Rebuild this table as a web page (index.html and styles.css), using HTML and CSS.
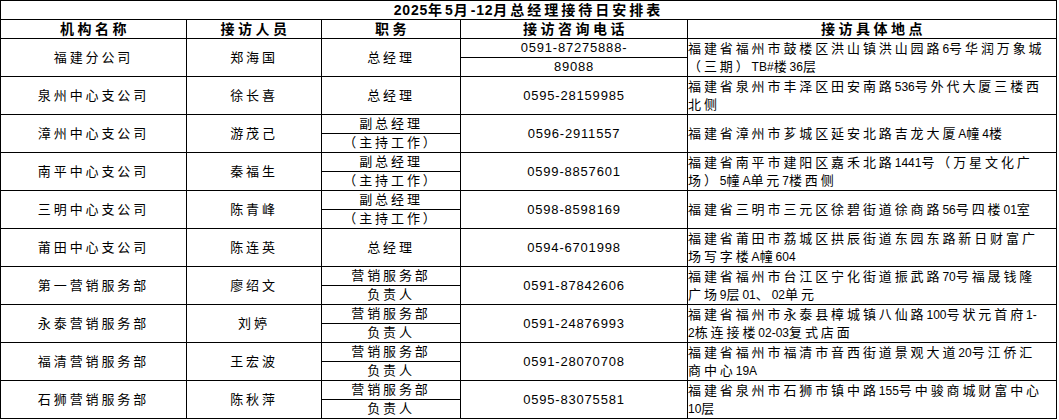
FILE: index.html
```html
<!DOCTYPE html>
<html lang="zh-CN">
<head>
<meta charset="utf-8">
<title>2025年5月-12月总经理接待日安排表</title>
<link rel="stylesheet" href="styles.css">
</head>
<body>
<table class="sheet">
  <colgroup>
    <col class="c-org"><col class="c-name"><col class="c-pos"><col class="c-tel"><col class="c-addr">
  </colgroup>
  <tr><td class="title" colspan="5"><span class="n">2025</span>年<span class="n">5</span>月<span class="n">-12</span>月总经理接待日安排表</td></tr>
  <tr class="head"><td>机构名称</td><td>接访人员</td><td>职务</td><td>接访咨询电话</td><td>接访具体地点</td></tr>

  <tr><td class="ctr" rowspan="2">福建分公司</td><td class="ctr" rowspan="2">郑海国</td><td class="ctr" rowspan="2">总经理</td><td class="tel">0591-87275888-</td><td class="addr" rowspan="2">福建省福州市鼓楼区洪山镇洪山园路<span class="n">6</span>号华润万象城<br>（三期）<span class="n">TB#</span>楼<span class="n">36</span>层</td></tr>
  <tr><td class="tel">89088</td></tr>

  <tr><td class="ctr" rowspan="2">泉州中心支公司</td><td class="ctr" rowspan="2">徐长喜</td><td class="ctr" rowspan="2">总经理</td><td class="tel" rowspan="2">0595-28159985</td><td class="addr" rowspan="2">福建省泉州市丰泽区田安南路<span class="n">536</span>号外代大厦三楼西<br>北侧</td></tr>
  <tr></tr>

  <tr><td class="ctr" rowspan="2">漳州中心支公司</td><td class="ctr" rowspan="2">游茂己</td><td class="ctr">副总经理</td><td class="tel" rowspan="2">0596-2911557</td><td class="addr" rowspan="2">福建省漳州市芗城区延安北路吉龙大厦<span class="n">A</span>幢<span class="n">4</span>楼</td></tr>
  <tr><td class="ctr">（主持工作）</td></tr>

  <tr><td class="ctr" rowspan="2">南平中心支公司</td><td class="ctr" rowspan="2">秦福生</td><td class="ctr">副总经理</td><td class="tel" rowspan="2">0599-8857601</td><td class="addr" rowspan="2">福建省南平市建阳区嘉禾北路<span class="n">1441</span>号（万星文化广<br>场）<span class="n">5</span>幢<span class="n">A</span>单元<span class="n">7</span>楼西侧</td></tr>
  <tr><td class="ctr">（主持工作）</td></tr>

  <tr><td class="ctr" rowspan="2">三明中心支公司</td><td class="ctr" rowspan="2">陈青峰</td><td class="ctr">副总经理</td><td class="tel" rowspan="2">0598-8598169</td><td class="addr" rowspan="2">福建省三明市三元区徐碧街道徐商路<span class="n">56</span>号四楼<span class="n">01</span>室</td></tr>
  <tr><td class="ctr">（主持工作）</td></tr>

  <tr><td class="ctr" rowspan="2">莆田中心支公司</td><td class="ctr" rowspan="2">陈连英</td><td class="ctr" rowspan="2">总经理</td><td class="tel" rowspan="2">0594-6701998</td><td class="addr" rowspan="2">福建省莆田市荔城区拱辰街道东园东路新日财富广<br>场写字楼<span class="n">A</span>幢<span class="n">604</span></td></tr>
  <tr></tr>

  <tr><td class="ctr" rowspan="2">第一营销服务部</td><td class="ctr" rowspan="2">廖绍文</td><td class="ctr">营销服务部</td><td class="tel" rowspan="2">0591-87842606</td><td class="addr" rowspan="2">福建省福州市台江区宁化街道振武路<span class="n">70</span>号福晟钱隆<br>广场<span class="n">9</span>层<span class="n">01</span>、<span class="n">02</span>单元</td></tr>
  <tr><td class="ctr">负责人</td></tr>

  <tr><td class="ctr" rowspan="2">永泰营销服务部</td><td class="ctr" rowspan="2">刘婷</td><td class="ctr">营销服务部</td><td class="tel" rowspan="2">0591-24876993</td><td class="addr" rowspan="2">福建省福州市永泰县樟城镇八仙路<span class="n">100</span>号状元首府<span class="n">1-</span><br><span class="n">2</span>栋连接楼<span class="n">02-03</span>复式店面</td></tr>
  <tr><td class="ctr">负责人</td></tr>

  <tr><td class="ctr" rowspan="2">福清营销服务部</td><td class="ctr" rowspan="2">王宏波</td><td class="ctr">营销服务部</td><td class="tel" rowspan="2">0591-28070708</td><td class="addr" rowspan="2">福建省福州市福清市音西街道景观大道<span class="n">20</span>号江侨汇<br>商中心<span class="n">19A</span></td></tr>
  <tr><td class="ctr">负责人</td></tr>

  <tr><td class="ctr" rowspan="2">石狮营销服务部</td><td class="ctr" rowspan="2">陈秋萍</td><td class="ctr">营销服务部</td><td class="tel" rowspan="2">0595-83075581</td><td class="addr" rowspan="2">福建省泉州市石狮市镇中路<span class="n">155</span>号中骏商城财富中心<br><span class="n">10</span>层</td></tr>
  <tr><td class="ctr">负责人</td></tr>
</table>
</body>
</html>
```

FILE: styles.css
```css
html, body {
  margin: 0;
  padding: 0;
  background: #fff;
  color: #000;
}

.sheet {
  border-collapse: collapse;
  table-layout: fixed;
  width: 1056px;
  font-family: "Liberation Sans", "Noto Sans CJK SC", sans-serif;
  font-size: 13px;
  color: #000;
}

.c-org { width: 186px; }
.c-name { width: 135px; }
.c-pos { width: 139px; }
.c-tel { width: 227px; }
.c-addr { width: 369px; }

.sheet tr { height: 19px; }

.sheet td {
  border: 1px solid #000;
  padding: 0;
  line-height: 18px;
  vertical-align: middle;
  white-space: nowrap;
  overflow: hidden;
}

.title {
  text-align: center;
  font-weight: bold;
  font-size: 14px;
  letter-spacing: 3px;
  padding-left: 3px;
}

.title .n {
  letter-spacing: 0.8px;
}

.head td {
  text-align: center;
  font-weight: bold;
  font-size: 14px;
  letter-spacing: 3.5px;
  padding-left: 3px;
}

.ctr {
  text-align: center;
  letter-spacing: 2.9px;
  padding-left: 3px;
}

.tel {
  text-align: center;
  letter-spacing: 0.8px;
}

.addr {
  text-align: left;
  letter-spacing: 2.9px;
  padding-left: 4px;
}

.addr .n {
  font-size: 12px;
  letter-spacing: 0;
}
```
